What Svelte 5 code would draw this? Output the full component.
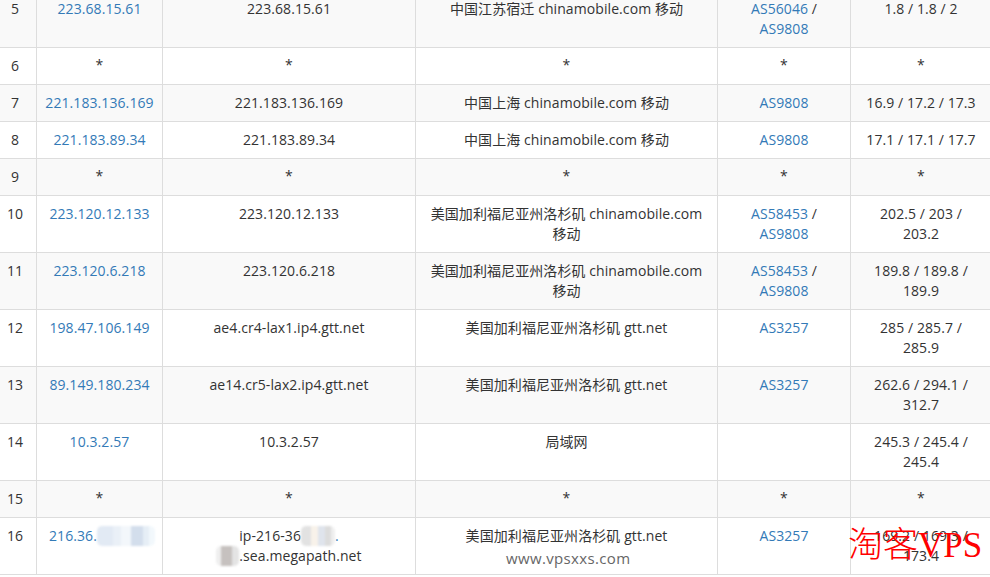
<script>
  const as = (...list) => list;
  const rows = [
    { n: 5, ip: '223.68.15.61', host: '223.68.15.61', geo: '中国江苏宿迁 chinamobile.com 移动', asn: as('AS56046', 'AS9808'), rtt: '1.8 / 1.8 / 2' },
    { n: 6, star: true },
    { n: 7, ip: '221.183.136.169', host: '221.183.136.169', geo: '中国上海 chinamobile.com 移动', asn: as('AS9808'), rtt: '16.9 / 17.2 / 17.3' },
    { n: 8, ip: '221.183.89.34', host: '221.183.89.34', geo: '中国上海 chinamobile.com 移动', asn: as('AS9808'), rtt: '17.1 / 17.1 / 17.7' },
    { n: 9, star: true },
    { n: 10, ip: '223.120.12.133', host: '223.120.12.133', geo: '美国加利福尼亚州洛杉矶 chinamobile.com 移动', asn: as('AS58453', 'AS9808'), rtt: '202.5 / 203 / 203.2' },
    { n: 11, ip: '223.120.6.218', host: '223.120.6.218', geo: '美国加利福尼亚州洛杉矶 chinamobile.com 移动', asn: as('AS58453', 'AS9808'), rtt: '189.8 / 189.8 / 189.9' },
    { n: 12, ip: '198.47.106.149', host: 'ae4.cr4-lax1.ip4.gtt.net', geo: '美国加利福尼亚州洛杉矶 gtt.net', asn: as('AS3257'), rtt: '285 / 285.7 / 285.9' },
    { n: 13, ip: '89.149.180.234', host: 'ae14.cr5-lax2.ip4.gtt.net', geo: '美国加利福尼亚州洛杉矶 gtt.net', asn: as('AS3257'), rtt: '262.6 / 294.1 / 312.7' },
    { n: 14, ip: '10.3.2.57', host: '10.3.2.57', geo: '局域网', asn: [], rtt: '245.3 / 245.4 / 245.4' },
    { n: 15, star: true }
  ];
</script>

<div class="page">
  <table>
    <colgroup>
      <col style="width: 43px" />
      <col style="width: 126px" />
      <col style="width: 253px" />
      <col style="width: 302px" />
      <col style="width: 133px" />
      <col style="width: 141px" />
    </colgroup>
    <tbody>
      {#each rows as r}
        <tr>
          <td>{r.n}</td>
          {#if r.star}
            <td class="star">*</td><td class="star">*</td><td class="star">*</td><td class="star">*</td><td class="star">*</td>
          {:else}
            <td><a href="#ip">{r.ip}</a></td>
            <td>{r.host}</td>
            <td>{r.geo}</td>
            <td>
              {#each r.asn as a, i}
                {#if i > 0}{' / '}{/if}<a href="#as">{a}</a>
              {/each}
            </td>
            <td class="rtt">{r.rtt}</td>
          {/if}
        </tr>
      {/each}
      <tr>
        <td class="nowrap"><span>16</span></td>
        <td class="nowrap"><a class="masked" href="#ip">216.36.</a><span class="mask mask-ip"></span></td>
        <td>ip-216-36<span class="mask mask-host1"></span><a href="#host">.</a><br /><span class="mask mask-host2"></span>.sea.megapath.net</td>
        <td>美国加利福尼亚州洛杉矶 gtt.net</td>
        <td><a href="#as">AS3257</a></td>
        <td class="rtt">169.2 / 169.3 / 173.4</td>
      </tr>
    </tbody>
  </table>
  <div class="site">www.vpsxxs.com</div>
  <div class="brand">淘客VPS</div>
</div>

<style>
  :global(body) {
    background: #fff;
    overflow: hidden;
  }

  .page {
    position: relative;
    width: 990px;
    height: 577px;
    overflow: hidden;
    font-family: "Open Sans", "Noto Sans CJK SC", sans-serif;
    font-size: 14px;
    line-height: 20px;
    letter-spacing: 0.08px;
    color: #333;
  }

  table {
    table-layout: fixed;
    border-collapse: collapse;
    width: 998px;
    margin: -10px 0 0 -7px;
  }

  td {
    padding: 8px;
    border: 1px solid #ddd;
    text-align: center;
    vertical-align: top;
  }

  td.rtt {
    padding: 8px 12px;
  }

  td.star {
    padding: 7px 8px 9px;
  }

  td.nowrap {
    white-space: nowrap;
  }

  tr:nth-child(odd) td {
    background: #f9f9f9;
  }

  a {
    color: #337ab7;
    text-decoration: none;
  }

  a.masked {
    margin-left: 4px;
  }

  .mask {
    display: inline-block;
    height: 20px;
    vertical-align: top;
    border-radius: 5px;
    filter: blur(0.8px);
  }

  .mask-ip {
    width: 58px;
    background: linear-gradient(90deg, #e2eaf4 0 16px, #eaf0f7 16px 24px, #f3f7fb 24px 34px, #d3deec 34px 46px, #e6eef6 46px 52px, #f2f8fc 52px);
  }

  .mask-host1 {
    width: 34px;
    background: linear-gradient(90deg, #e2e2e2 0 10px, #f8f2ea 10px 17px, #dfe4ec 17px 24px, #dcdcdc 24px 30px, #efefef 30px);
  }

  .mask-host2 {
    width: 23px;
    background: linear-gradient(90deg, #efefef 0 5px, #c6c1bf 5px 16px, #e4e4e4 16px);
  }

  .site {
    position: absolute;
    left: 506px;
    top: 548px;
    font-size: 15px;
    letter-spacing: 0.35px;
    color: #666;
  }

  .brand {
    position: absolute;
    left: 848px;
    top: 524px;
    font-family: "Liberation Serif", "Noto Sans CJK SC", serif;
    font-size: 35px;
    line-height: 44px;
    letter-spacing: 0;
    font-weight: 300;
    color: #f00;
  }
</style>
